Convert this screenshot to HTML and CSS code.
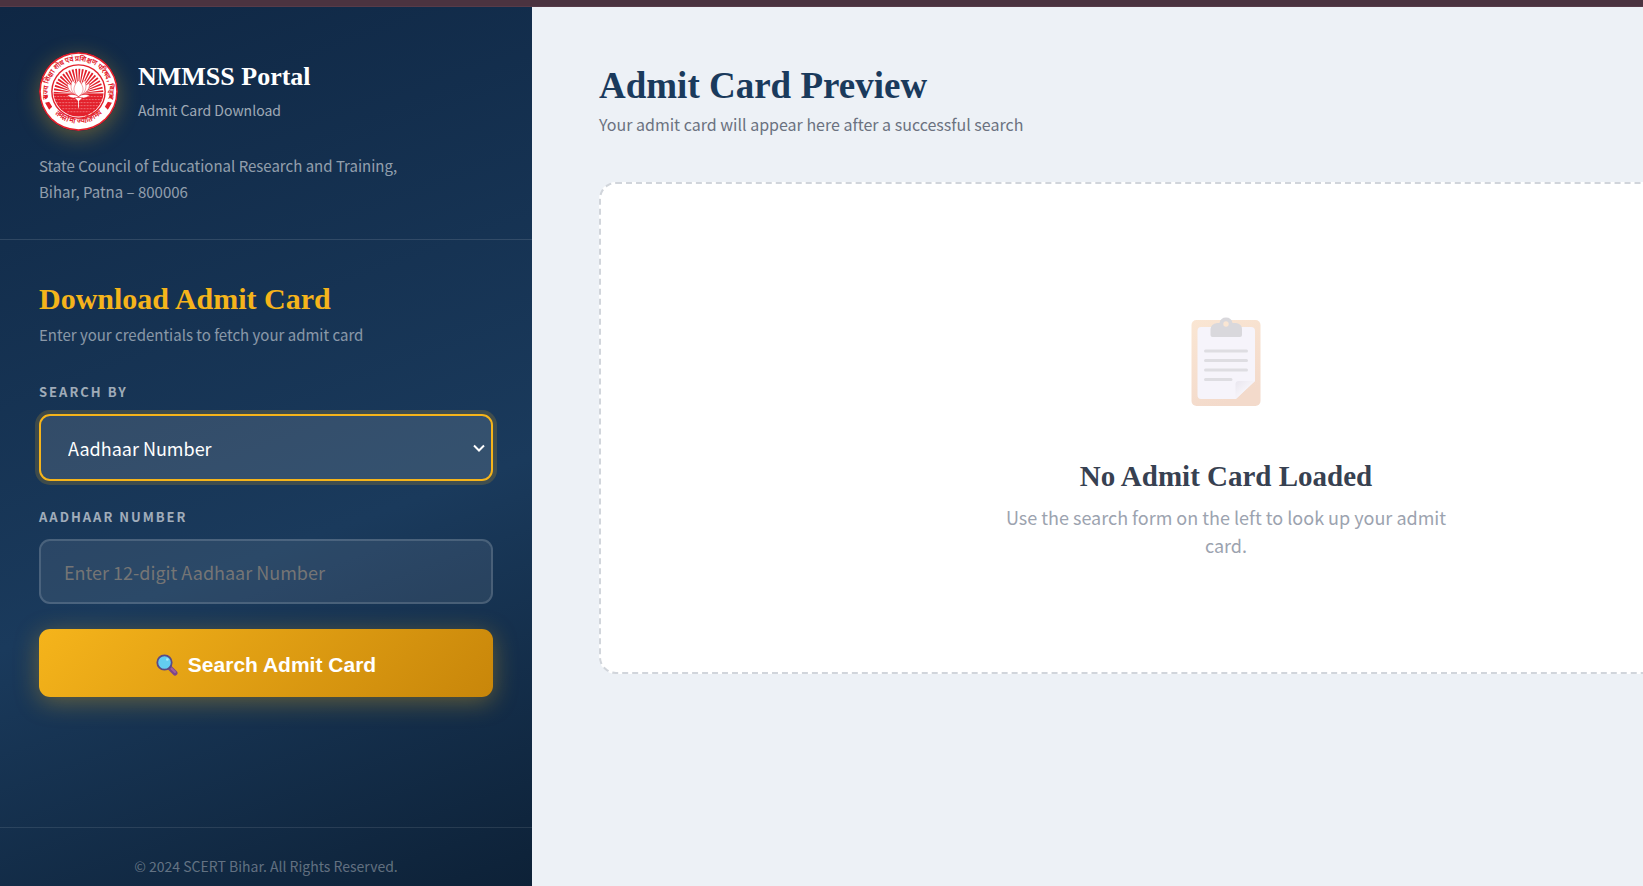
FILE: index.html
```html
<!DOCTYPE html>
<html lang="en">
<head>
  <meta charset="UTF-8"/>
  <meta name="viewport" content="width=device-width, initial-scale=1.0"/>
  <title>NMMSS Portal - Admit Card Download</title>
  <link rel="stylesheet" href="styles.css">
</head>
<body>
  <div class="top-bar"></div>
  <div class="layout">
    <aside class="sidebar">
      <header class="sidebar-header">
        <div class="brand">
          <svg class="logo" viewBox="0 0 78 78" aria-label="SCERT Bihar">
            <defs>
              <clipPath id="sky"><rect x="0" y="0" width="78" height="41"/></clipPath>
              <clipPath id="water"><rect x="0" y="41" width="78" height="37"/></clipPath>
              <path id="arc-top" d="M 9.4 46 A 30.4 30.4 0 1 1 68.6 46"/>
              <path id="arc-bottom" d="M 10 54 A 34 34 0 0 0 68 54"/>
            </defs>
            <circle cx="39" cy="39" r="39" fill="#e3202b"/>
            <circle cx="39" cy="39" r="37.2" fill="#fff"/>
            <circle cx="39" cy="39" r="27" fill="#e3202b"/>
            <circle cx="39" cy="39" r="25.6" fill="#fff"/>
            <circle cx="39" cy="39" r="24.8" fill="#e3202b" clip-path="url(#water)"/>
            <g clip-path="url(#sky)">
              <circle cx="39" cy="41" r="13" fill="none" stroke="#e3202b" stroke-width="23" pathLength="88" stroke-dasharray="1.1 0.9"/>
            </g>
            <g stroke="#f6a3a6" stroke-width="0.6" stroke-dasharray="2 1" fill="none">
              <path d="M15 44H63M16 47H62M17 50H61M20 53H58M23 56H55M28 59H50"/>
            </g>
            <!-- lotus -->
            <g fill="#fff" stroke="#e3202b" stroke-width="0.4">
              <path d="M39 42C32 42 28 37 28 31C32 32 36 36 39 42Z"/>
              <path d="M39 42C46 42 50 37 50 31C46 32 42 36 39 42Z"/>
              <path d="M39 44C32 41 30 35 33 28C37 31 39 37 39 44Z"/>
              <path d="M39 44C46 41 48 35 45 28C41 31 39 37 39 44Z"/>
              <path d="M39 44C33 40 33 34 39 28C45 34 45 40 39 44Z"/>
              <path d="M28 43C32 41 36 42 39 44C42 42 46 41 50 43C46 46 42 46 39 44C36 46 32 46 28 43Z"/>
              <path d="M35 45H43L39 49Z"/>
            </g>
            <path d="M39 48V55" stroke="#fff" stroke-width="0.8"/>
            <g fill="#e3202b">
              <circle cx="7" cy="44" r="1.7"/>
              <circle cx="71" cy="44" r="1.7"/>
              <path d="M6 50l4-1 3 5-3 3zM72 50l-4-1-3 5 3 3z"/>
            </g>
            <text class="logo-text"><textPath href="#arc-top" startOffset="50%">राज्य शिक्षा शोध एवं प्रशिक्षण परिषद, बिहार</textPath></text>
            <text class="logo-text"><textPath href="#arc-bottom" startOffset="50%">तमसो मा ज्योतिर्गमय</textPath></text>
          </svg>
          <div>
            <h1>NMMSS Portal</h1>
            <p class="tagline">Admit Card Download</p>
          </div>
        </div>
        <p class="address">State Council of Educational Research and Training,<br>Bihar, Patna – 800006</p>
      </header>

      <form class="search-form">
        <h2>Download Admit Card</h2>
        <p class="hint">Enter your credentials to fetch your admit card</p>

        <label for="search-by">Search By</label>
        <div class="select-wrapper">
          <select id="search-by" class="field active">
            <option>Aadhaar Number</option>
            <option>Registration Number</option>
          </select>
          <svg class="chevron" viewBox="0 0 14 14"><path d="M2 4.5L7 9.5L12 4.5"/></svg>
        </div>

        <label for="aadhaar">Aadhaar Number</label>
        <input type="text" id="aadhaar" class="field" maxlength="12" placeholder="Enter 12-digit Aadhaar Number">

        <button type="button" class="btn">
          <svg class="search-icon" viewBox="0 0 22 22">
            <path d="M14.5 14.5L19 19" stroke="#7d4689" stroke-width="5" stroke-linecap="round"/>
            <path d="M15.5 14.5L19 18" stroke="#a0609c" stroke-width="2" stroke-linecap="round"/>
            <circle cx="8.5" cy="8.5" r="7.2" fill="#63cdf0" stroke="#5a4a86" stroke-width="1.8"/>
            <circle cx="11.3" cy="5.5" r="1.3" fill="#a9e8fa"/>
          </svg>
          Search Admit Card
        </button>
      </form>

      <footer class="sidebar-footer">© 2024 SCERT Bihar. All Rights Reserved.</footer>
    </aside>

    <main class="preview">
      <h2>Admit Card Preview</h2>
      <p class="subtitle">Your admit card will appear here after a successful search</p>

      <section class="empty-card">
        <svg class="clipboard" viewBox="0 0 70 90">
          <defs>
            <linearGradient id="board" x1="0" y1="0" x2="0.4" y2="1">
              <stop offset="0" stop-color="#fae6d3"/>
              <stop offset="1" stop-color="#f3dacb"/>
            </linearGradient>
            <linearGradient id="fold" x1="0" y1="0" x2="0.6" y2="0.6">
              <stop offset="0" stop-color="#e9e6ef"/>
              <stop offset="1" stop-color="#f8f6fb"/>
            </linearGradient>
          </defs>
          <rect x="0.5" y="3" width="69" height="86" rx="5" fill="url(#board)"/>
          <path d="M10 10H60Q64 10 64 14V64L45 82H10Q6.5 82 6.5 78V14Q6.5 10 10 10Z" fill="#f6f4fb"/>
          <path d="M44.5 82V67Q44.500 64 48 64H64Z" fill="url(#fold)"/>
          <path d="M19.5 18V12Q20 7 26 6H28.500Q29.500 0.500 35 0.500T41.500 6H45Q51 7 51 12V18Q51 20 49 20H21.500Q19.500 20 19.500 18Z" fill="#d9d8dc"/>
          <circle cx="35" cy="7" r="2.7" fill="#fae6d3"/>
          <path d="M14.5 34H55.5M14.5 43.5H55.5M14.5 53H55.5M14.5 62.5H40" stroke="#dedde2" stroke-width="3" stroke-linecap="round"/>
        </svg>
        <h3>No Admit Card Loaded</h3>
        <p>Use the search form on the left to look up your admit card.</p>
      </section>
    </main>
  </div>
</body>
</html>
```
FILE: styles.css
```css
* {
  box-sizing: border-box;
  margin: 0;
  padding: 0;
}

body {
  font-family: "Noto Sans CJK SC", sans-serif;
  background: #edf1f6;
  min-height: 100vh;
  display: flex;
  flex-direction: column;
  overflow: hidden;
}

h1, h2, h3 {
  font-family: "Liberation Serif", serif;
  font-weight: bold;
}

.top-bar {
  height: 7px;
  background: #4b3340;
  border-bottom: 1px solid #573b49;
}

.layout {
  flex: 1;
  display: flex;
  min-width: 1920px;
}

.sidebar {
  width: 532px;
  flex-shrink: 0;
  display: flex;
  flex-direction: column;
  background: linear-gradient(160deg, #0f2744 0%, #1a3a5c 60%, #0d2137 100%);
}

.sidebar-header {
  padding: 45px 39px 34px;
  border-bottom: 1px solid rgba(255, 255, 255, 0.12);
}

.brand {
  display: flex;
  align-items: center;
  gap: 20px;
  margin-bottom: 22px;
}

.logo {
  width: 79px;
  height: 79px;
  border-radius: 50%;
  box-shadow: 0 5px 21px rgba(245, 183, 27, 0.35);
}

.logo-text {
  font-size: 7px;
  font-weight: bold;
  text-anchor: middle;
  fill: #e3202b;
}

h1 {
  font-size: 26px;
  line-height: 34px;
  color: #fff;
}

.tagline {
  margin-top: 2px;
  font-size: 14px;
  line-height: 28px;
  color: rgba(255, 255, 255, 0.6);
}

.address {
  font-size: 15px;
  line-height: 26px;
  color: rgba(255, 255, 255, 0.55);
}

.search-form {
  flex: 1;
  padding: 40px 39px;
}

.search-form h2 {
  font-size: 30px;
  line-height: 38px;
  color: #f5b41b;
}

.hint {
  margin: 4px 0 32px;
  font-size: 15px;
  line-height: 26px;
  color: rgba(255, 255, 255, 0.5);
}

label {
  display: block;
  margin-bottom: 10px;
  font-size: 13px;
  line-height: 24px;
  font-weight: bold;
  letter-spacing: 2px;
  text-transform: uppercase;
  color: rgba(255, 255, 255, 0.6);
}

.select-wrapper {
  position: relative;
  margin-bottom: 24px;
}

.field {
  display: block;
  width: 100%;
  height: 65px;
  padding: 0 23px;
  border: 2px solid rgba(255, 255, 255, 0.15);
  border-radius: 11px;
  outline: none;
  background: rgba(255, 255, 255, 0.08);
  font-family: inherit;
  font-size: 18px;
  color: #fff;
}

select.field {
  height: 67px;
  padding: 0 27px;
  appearance: none;
}

.field.active {
  border-color: #f5b41b;
  background: rgba(255, 255, 255, 0.12);
  box-shadow: 0 0 0 4px rgba(245, 180, 27, 0.18);
}

.field::placeholder {
  color: #757575;
}

.chevron {
  position: absolute;
  right: 7px;
  top: 27px;
  width: 14px;
  height: 14px;
  fill: none;
  stroke: #fff;
  stroke-width: 2;
  pointer-events: none;
}

.btn {
  width: 100%;
  height: 68px;
  margin-top: 25px;
  padding-top: 4px;
  display: flex;
  justify-content: center;
  align-items: center;
  gap: 10px;
  border: none;
  border-radius: 11px;
  background: linear-gradient(135deg, #f5b41b, #c8860a);
  box-shadow: 0 5px 24px rgba(245, 180, 27, 0.35);
  font-family: "Liberation Sans", sans-serif;
  font-size: 21px;
  font-weight: bold;
  color: #fff;
  cursor: pointer;
}

.search-icon {
  width: 22px;
  height: 22px;
  fill: none;
}

.sidebar-footer {
  padding: 25px 39px 6px;
  border-top: 1px solid rgba(255, 255, 255, 0.1);
  font-size: 14px;
  line-height: 27px;
  text-align: center;
  color: rgba(255, 255, 255, 0.35);
}

.preview {
  flex: 1;
  padding: 56px 67px;
}

.preview h2 {
  font-size: 37px;
  line-height: 46px;
  color: #1a3a5c;
}

.subtitle {
  margin: 2px 0 44px;
  font-size: 16px;
  line-height: 27px;
  color: #6b7280;
}

.empty-card {
  display: flex;
  flex-direction: column;
  align-items: center;
  height: 492px;
  padding-top: 133px;
  border: 2px dashed #d1d5db;
  border-radius: 17px;
  background: #fff;
  text-align: center;
}

.clipboard {
  width: 70px;
  height: 90px;
  margin-bottom: 50px;
}

.empty-card h3 {
  font-size: 29px;
  line-height: 38px;
  color: #374151;
}

.empty-card p {
  max-width: 450px;
  margin-top: 8px;
  font-size: 18px;
  line-height: 28px;
  color: #9ca3af;
}
```
